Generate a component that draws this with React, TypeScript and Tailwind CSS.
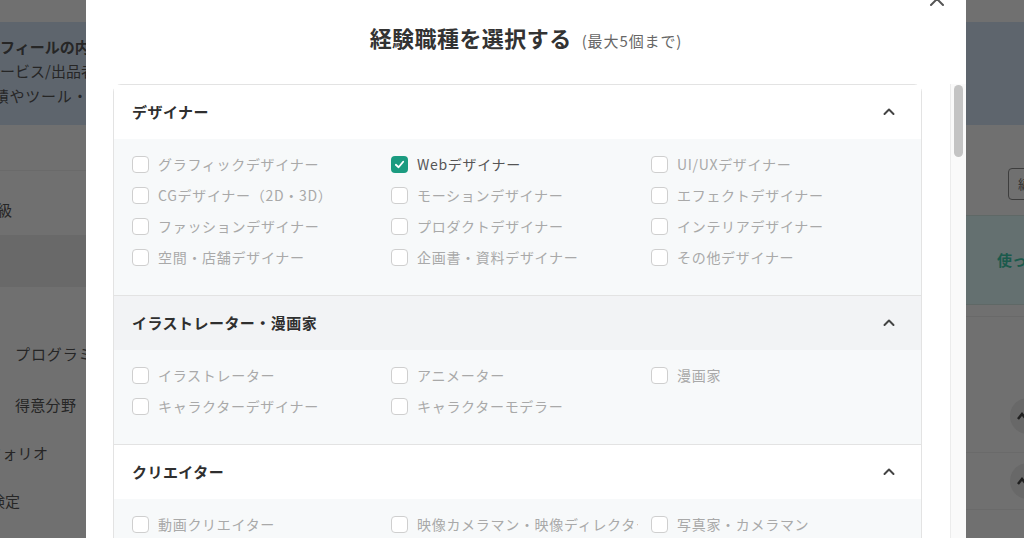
import React from "react";

type Item = { label: string; checked?: boolean };
type Section = { title: string; items: Item[]; headerBg: string };

const sections: Section[] = [
  {
    title: "デザイナー",
    headerBg: "bg-white",
    items: [
      { label: "グラフィックデザイナー" },
      { label: "Webデザイナー", checked: true },
      { label: "UI/UXデザイナー" },
      { label: "CGデザイナー（2D・3D）" },
      { label: "モーションデザイナー" },
      { label: "エフェクトデザイナー" },
      { label: "ファッションデザイナー" },
      { label: "プロダクトデザイナー" },
      { label: "インテリアデザイナー" },
      { label: "空間・店舗デザイナー" },
      { label: "企画書・資料デザイナー" },
      { label: "その他デザイナー" },
    ],
  },
  {
    title: "イラストレーター・漫画家",
    headerBg: "bg-[#f2f3f5]",
    items: [
      { label: "イラストレーター" },
      { label: "アニメーター" },
      { label: "漫画家" },
      { label: "キャラクターデザイナー" },
      { label: "キャラクターモデラー" },
    ],
  },
  {
    title: "クリエイター",
    headerBg: "bg-white",
    items: [
      { label: "動画クリエイター" },
      { label: "映像カメラマン・映像ディレクター" },
      { label: "写真家・カメラマン" },
      { label: "音楽クリエイター" },
      { label: "ナレーター・声優" },
      { label: "その他クリエイター" },
    ],
  },
];

function Chevron() {
  return (
    <svg width="14" height="14" viewBox="0 0 14 14" fill="none">
      <polyline
        points="2.5,9 7,4.5 11.5,9"
        stroke="#444"
        strokeWidth="2"
        strokeLinecap="round"
        strokeLinejoin="round"
      />
    </svg>
  );
}

function CheckBox({ checked }: { checked?: boolean }) {
  if (checked) {
    return (
      <span className="flex h-[17px] w-[17px] shrink-0 items-center justify-center rounded-[4px] bg-[#1b9b80]">
        <svg width="11" height="11" viewBox="0 0 12 12" fill="none">
          <polyline
            points="2,6.3 5,9 10,3"
            stroke="white"
            strokeWidth="2"
            strokeLinecap="round"
            strokeLinejoin="round"
          />
        </svg>
      </span>
    );
  }
  return (
    <span className="h-[17px] w-[17px] shrink-0 rounded-[4px] border-[1.5px] border-[#cfcfcf] bg-white" />
  );
}

function SectionBlock({ s, last }: { s: Section; last: boolean }) {
  return (
    <div className={last ? "" : "border-b border-[#e3e3e3]"}>
      <div
        className={`flex h-[54px] items-center justify-between pl-[18px] pr-[25px] ${s.headerBg}`}
      >
        <span className="text-[15px] font-bold tracking-[0.03em] text-[#2f2f2f]">
          {s.title}
        </span>
        <Chevron />
      </div>
      <div className="grid grid-cols-[259px_260px_1fr] bg-[#f7f9fa] pb-[22px] pl-[18px] pt-[10px]">
        {s.items.map((it) => (
          <div
            key={it.label}
            className="flex h-[31px] min-w-0 items-center gap-[9px] whitespace-nowrap pr-[13px]"
          >
            <CheckBox checked={it.checked} />
            <span
              className={`min-w-0 overflow-hidden text-[14px] tracking-[0.05em] ${
                it.checked ? "text-[#555]" : "text-[#a9a9a9]"
              }`}
            >
              {it.label}
            </span>
          </div>
        ))}
      </div>
    </div>
  );
}

function LeftStrip() {
  return (
    <div className="flex w-[86px] shrink-0 flex-col overflow-hidden bg-[#707070] text-[15px] text-[#262626]">
      <div className="h-[22px]" />
      <div className="flex h-[103px] flex-col justify-center gap-[2px] bg-[#5e656d] pb-[4px]">
        <div className="ml-[-30px] whitespace-nowrap font-bold">プロフィールの内容</div>
        <div className="ml-[-15px] whitespace-nowrap">サービス/出品者情報</div>
        <div className="ml-[-22px] whitespace-nowrap tracking-[0.05em]">実績やツール・フレーム</div>
      </div>
      <div className="h-[45px]" />
      <div className="flex h-[65px] items-center border-t border-[#6a6a6a] pt-[14px]">
        <div className="ml-[-3px] whitespace-nowrap">級</div>
      </div>
      <div className="h-[52px] bg-[#696969]" />
      <div className="flex flex-1 flex-col pt-[53px]">
        <div className="flex h-[28px] items-center whitespace-nowrap pl-[15px] tracking-[0.06em]">
          プログラミング
        </div>
        <div className="mt-[23px] flex h-[28px] items-center whitespace-nowrap pl-[15px] tracking-[0.02em]">
          得意分野
        </div>
        <div className="mt-[20px] ml-[-13px] flex h-[28px] items-center whitespace-nowrap tracking-[0.02em]">
          フォリオ
        </div>
        <div className="mt-[20px] ml-[-10px] flex h-[28px] items-center whitespace-nowrap">
          検定
        </div>
      </div>
    </div>
  );
}

function UpCircle() {
  return (
    <div className="flex h-[36px] w-[36px] shrink-0 items-center justify-center rounded-full bg-[#686868]">
      <svg width="14" height="14" viewBox="0 0 14 14" className="-ml-[12px]">
        <polyline points="3,10 7,5 11,10" stroke="#1f1f1f" strokeWidth="2.5" fill="none" />
      </svg>
    </div>
  );
}

function RightStrip() {
  return (
    <div className="flex flex-1 flex-col overflow-hidden bg-[#707070]">
      <div className="h-[22px]" />
      <div className="h-[103px] bg-[#5e656d]" />
      <div className="flex h-[90px] items-start pl-[42px] pt-[43px]">
        <div className="flex h-[32px] w-[48px] shrink-0 items-center whitespace-nowrap rounded-[4px] border border-[#3d3d3d] pl-[9px] text-[13px] text-[#333]">
          編集
        </div>
      </div>
      <div className="flex h-[90px] items-center border-y border-[#5f6866] bg-[#647070] pl-[31px] text-[15px] font-bold text-[#1b5a4c]">
        <span className="whitespace-nowrap">使ってみる</span>
      </div>
      <div className="h-[12px] border-b border-[#696969]" />
      <div className="flex h-[136px] items-end border-b border-[#6a6a6a] pb-[18px] pl-[44px]">
        <UpCircle />
      </div>
      <div className="flex h-[57px] items-center border-b border-[#6a6a6a] pl-[44px]">
        <UpCircle />
      </div>
    </div>
  );
}

export default function App() {
  return (
    <div className="flex h-[538px] w-[1024px] overflow-hidden font-['Noto_Sans_CJK_JP','Noto_Sans',sans-serif]">
      <LeftStrip />
      <div className="flex w-[880px] shrink-0 flex-col bg-white">
        <div className="relative flex h-[84px] shrink-0 items-baseline justify-center pb-[8px] pt-[21px]">
          <span className="text-[22px] font-bold tracking-[0.02em] text-[#333]">
            経験職種を選択する
          </span>
          <span className="ml-[10px] text-[15px] tracking-[0.06em] text-[#666]">
            (最大5個まで)
          </span>
          <svg
            width="20"
            height="20"
            viewBox="0 0 20 20"
            className="absolute right-[19px] top-[-11px]"
          >
            <path d="M4 4 L16 16 M16 4 L4 16" stroke="#555" strokeWidth="2" strokeLinecap="round" />
          </svg>
        </div>
        <div className="flex min-h-0 flex-1">
          <div className="min-h-0 flex-1 overflow-hidden pl-[27px] pr-[28px]">
            <div className="rounded-t-[8px] border border-[#e3e3e3]">
              {sections.map((s, i) => (
                <SectionBlock key={s.title} s={s} last={i === sections.length - 1} />
              ))}
            </div>
          </div>
          <div className="flex w-[16px] shrink-0 flex-col border-l border-[#ececec] bg-[#fafafa] pl-[3px] pr-[3px] pt-[1px]">
            <div className="h-[72px] w-[9px] rounded-full bg-[#c4c4c4]" />
          </div>
        </div>
      </div>
      <RightStrip />
    </div>
  );
}
